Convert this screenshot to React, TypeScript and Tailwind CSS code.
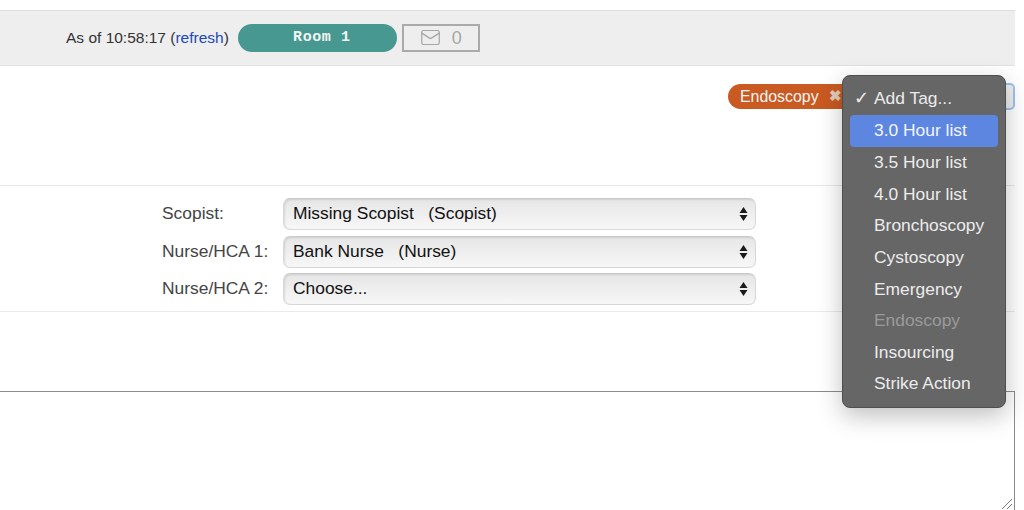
import React from 'react';
import { Mail } from 'lucide-react';

const staffRows = [
  { label: 'Scopist:', value: 'Missing Scopist\u00a0\u00a0\u00a0(Scopist)' },
  { label: 'Nurse/HCA 1:', value: 'Bank Nurse\u00a0\u00a0\u00a0(Nurse)' },
  { label: 'Nurse/HCA 2:', value: 'Choose...' },
];

const tagOptions = [
  '3.5 Hour list',
  '4.0 Hour list',
  'Bronchoscopy',
  'Cystoscopy',
  'Emergency',
  'Endoscopy',
  'Insourcing',
  'Strike Action',
];

const SelectBox: React.FC<{ value: string }> = ({ value }) => (
  <div className="flex h-[32px] w-[473px] items-center justify-between rounded-[7px] border border-[#d8d8d8] border-t-[#cacaca] bg-gradient-to-b from-[#e6e6e6] to-[#f7f7f7] pl-[9px] pr-[7px] text-[17.4px] text-[#111] shadow-[inset_1px_1px_2px_rgba(0,0,0,0.1)]">
    <span className="pb-[1px]">{value}</span>
    <svg width="9" height="16" viewBox="0 0 9 16" className="fill-[#1a1a1a]">
      <path d="M4.5 1 8.5 7H.5Z" />
      <path d="M4.5 15 .5 9h8Z" />
    </svg>
  </div>
);

const App: React.FC = () => {
  return (
    <div className="relative h-[510px] w-[1024px] overflow-hidden bg-white font-['Liberation_Sans',Arial,sans-serif]">
      <div className="w-[1015px] pt-[10px]">
        <div className="flex h-[56px] items-center border-y border-b-[#e2e2e2] border-t-[#dedede] bg-[#eeeeee] pl-[66px]">
          <span className="text-[15.5px] text-[#333]">
            As of 10:58:17 (<span className="text-[#2148b8]">refresh</span>)
          </span>
          <div className="ml-[9px] flex h-[28px] w-[159px] items-center justify-center rounded-full bg-[#479890] pl-[9px] font-['Liberation_Mono',monospace] text-[15px] font-bold tracking-[0.6px] text-[#f4f4f4]">
            Room 1
          </div>
          <div className="ml-[5px] flex h-[28px] w-[78px] items-center justify-center gap-[11px] border-2 border-[#aaaaaa] text-[#a6a6a6]">
            <Mail size={21} strokeWidth={1.4} className="-mt-[2px]" />
            <span className="text-[18px]">0</span>
          </div>
        </div>

        <div className="flex h-[120px] items-start justify-end border-b border-[#e8e8e8] pt-[18px]">
          <div className="flex h-[25px] w-[125px] items-center gap-[10px] rounded-l-full bg-[#c95a21] pl-[12px] text-[15.9px] text-[#f5f5f5]">
            <span>Endoscopy</span>
            <span className="text-[15px] font-bold text-[#e4ccbc]">✖</span>
          </div>
          <div className="ml-[1px] -mt-[1px] h-[27px] w-[161px] rounded-[5px] border-2 border-[#9dc0f0] bg-[#eeeeee]" />
        </div>

        <div className="flex h-[126px] flex-col gap-[5.5px] border-b border-[#eaeaea] pl-[162px] pt-[12px]">
          {staffRows.map(row => (
            <div key={row.label} className="flex items-center">
              <span className="w-[121px] text-[17.4px] leading-none text-[#444]">{row.label}</span>
              <SelectBox value={row.value} />
            </div>
          ))}
        </div>

        <div className="relative mt-[79px] h-[125px] border border-[#8c8c8c] border-l-0">
          <svg width="12" height="12" viewBox="0 0 12 12" className="absolute bottom-[5px] right-[1px] stroke-[#777]">
            <path d="M1 11 11 1M6 11l5-5" fill="none" strokeWidth="1" />
          </svg>
        </div>
      </div>

      <div className="absolute left-[842px] top-[75px] flex h-[333px] w-[164px] flex-col rounded-[8px] border border-[#4e4e4e] bg-[#666666] px-[7px] pt-[7px] text-[17.4px] text-[#ececec] shadow-[0_8px_24px_rgba(0,0,0,0.25)]">
        <div className="relative flex h-[32px] items-center pb-[1px] pl-[24px]">
          <span className="absolute left-[4px] text-[18px]">✓</span>
          Add Tag...
        </div>
        <div className="flex h-[32px] items-center rounded-[4px] bg-[#5c86e0] pb-[1px] pl-[24px] text-[#f4f6fb]">3.0 Hour list</div>
        {tagOptions.map(option => (
          <div
            key={option}
            className={`flex h-[31.6px] items-center pb-[1px] pl-[24px] ${option === 'Endoscopy' ? 'text-[#9a9a9a]' : ''}`}
          >
            {option}
          </div>
        ))}
      </div>
    </div>
  );
};

export default App;
